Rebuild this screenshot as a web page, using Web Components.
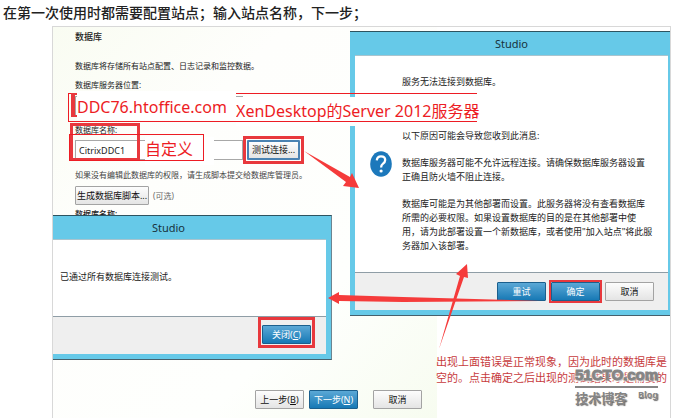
<!DOCTYPE html>
<html lang="zh-CN">
<head>
<meta charset="utf-8">
<title>配置站点</title>
<style>
html,body{margin:0;height:100%;overflow:hidden;background:#fff}
body{font-family:"Noto Sans","Noto Sans CJK SC",sans-serif;color:#222}
</style>
</head>
<body>
<site-article></site-article>
<script>
const define = (name, html) => customElements.define(name, class extends HTMLElement {
  connectedCallback() {
    if (this.shadowRoot) return;
    this.attachShadow({mode: 'open'}).innerHTML = html;
  }
});

define('ui-button', `
<style>
:host{display:block;width:49px;height:19px}
button{display:block;box-sizing:border-box;width:100%;height:100%;padding:0;border:1px solid #a3a3a3;border-radius:1px;
 background:linear-gradient(#fdfdfd,#e4e4e4);color:#111;font:9px/16px "Noto Sans","Noto Sans CJK SC",sans-serif;white-space:nowrap}
:host([kind=primary]) button{background:linear-gradient(#5ba8d6,#1779b5);border-color:#1b5f8d;color:#fff}
:host([kind=focus]) button{border:2px solid #4a82b2;line-height:14px}
</style><button type="button"><slot></slot></button>`);

define('mark-box', `
<style>
:host{display:block;box-sizing:border-box;border:3px solid #e8383d;padding:1px}
:host([thin]){border:1px solid #ed1c24}
</style><slot></slot>`);

define('studio-dialog', `
<style>
:host{display:flex;flex-direction:column;box-sizing:border-box;background:#66c9e8;border-top:1px solid #2d5360;border-bottom:1px solid #46606c}
header{height:23px;padding-right:var(--title-inset,0);text-align:center;font-size:11px;line-height:23px;color:#17323c}
.body{flex:1;background:#fff;border-top:1px solid #a9c4ce;box-sizing:border-box;font-size:9px;line-height:14px;color:#222}
footer{display:flex;align-items:center;justify-content:flex-end;height:37px;background:#efefef;border-top:1px solid #8f9da6}
</style>
<header>Studio</header>
<div class="body"><slot></slot></div>
<footer><slot name="actions"></slot></footer>`);

define('error-dialog', `
<style>
:host{display:block}
studio-dialog{height:285px;padding:0 2px 5px 5px}
.msg{display:grid;grid-template-columns:32px 1fr;padding:19px 14px 0 15px}
p{margin:0 0 13px;grid-column:2}
p.first{margin-bottom:40px}
svg{grid-column:1;width:22px;height:26px;margin-top:-5px}
.actions{display:flex;align-items:center;gap:3px;padding-right:14px}
mark-box{padding:0;border-width:2px}
</style>
<studio-dialog>
<div class="msg">
<p class="first">服务无法连接到数据库。</p>
<p>以下原因可能会导致您收到此消息:</p>
<svg viewBox="0 0 22 26"><ellipse cx="11" cy="13" rx="10.8" ry="12.8" fill="#1c78bb"/><path d="M6.8 9.3Q7.2 5.4 11 5.4Q15.2 5.4 15.2 9Q15.2 11.2 12.8 12.9Q11.1 14.2 11.1 16.4" fill="none" stroke="#fff" stroke-width="2.3"/><circle cx="11.1" cy="20" r="1.6" fill="#fff"/></svg>
<p>数据库服务器可能不允许远程连接。请确保数据库服务器设置<br>正确且防火墙不阻止连接。</p>
<p>数据库可能是为其他部署而设置。此服务器将没有查看数据库<br>所需的必要权限。如果设置数据库的目的是在其他部署中使<br>用，请为此部署设置一个新数据库，或者使用"加入站点"将此服<br>务器加入该部署。</p>
</div>
<div class="actions" slot="actions">
<ui-button kind="primary">重试</ui-button>
<mark-box><ui-button kind="primary">确定</ui-button></mark-box>
<ui-button>取消</ui-button>
</div>
</studio-dialog>`);

define('success-dialog', `
<style>
:host{display:block}
studio-dialog{--title-inset:42px;height:145px;padding:0 5px 5px 0;border-right:1px solid #6b8591}
p{margin:0;padding:30px 7px}
mark-box{align-self:flex-start;margin-right:11px;padding:5px 1px 1px}
</style>
<studio-dialog>
<p>已通过所有数据库连接测试。</p>
<mark-box slot="actions"><ui-button kind="primary">关闭(<u>C</u>)</ui-button></mark-box>
</studio-dialog>`);

define('site-wizard', `
<style>
:host{display:flex;flex-direction:column;box-sizing:border-box;padding:0 0 9px 22px;font-size:8px;
 background:linear-gradient(135deg,#f9fcf2,#fefefc 30%,#fefffd 70%,#f7fcf0)}
h2{margin:0;font-size:9px;line-height:20px;font-weight:500;color:#222}
p{margin:0;line-height:12px}
.intro{padding:13px 0 7px}
label{display:block;line-height:12px}
input{box-sizing:border-box;width:168px;height:20px;border:1px solid #a8a8a8;background:#fff;padding:0 3px;font:9px "Noto Sans",sans-serif;color:#222;display:block}
.server{margin:5px 0 8px;height:20px}
.row{display:flex;align-items:center;height:28px}
mark-box{flex:none}
mark-box ui-button{width:53px;height:20px}
.hint{padding:5px 0 5px;color:#444}
.script{display:flex;align-items:center;gap:4px;color:#666}
.script ui-button{width:74px}
.next{margin-top:3px;font-weight:500}
.nav{display:flex;margin-top:auto;gap:5px;padding-left:180px}
.nav .last{margin-left:10px}
</style>
<h2>数据库</h2>
<p class="intro">数据库将存储所有站点配置、日志记录和监控数据。</p>
<label for="server">数据库服务器位置:</label>
<input id="server" class="server">
<label for="db">数据库名称:</label>
<div class="row"><input id="db" value="CitrixDDC1"><mark-box><ui-button kind="focus">测试连接...</ui-button></mark-box></div>
<p class="hint">如果没有编辑此数据库的权限，请生成脚本提交给数据库管理员。</p>
<div class="script"><ui-button>生成数据库脚本...</ui-button><span>(可选)</span></div>
<p class="next">数据库名称:</p>
<div class="nav"><ui-button>上一步(<u>B</u>)</ui-button><ui-button kind="primary">下一步(<u>N</u>)</ui-button><ui-button class="last">取消</ui-button></div>`);

define('blog-watermark', `
<style>
:host{display:block;color:#858585;font-weight:700;text-shadow:-1px -1px 1px #fff,1px 1px 1px #666}
.top{font:700 15px/22px "Liberation Sans",sans-serif;-webkit-text-stroke:1px #858585;text-shadow:-1px -1px 1px #fff,0 -2px 2px #fff,0 2px 2px #fff,1px 1px 1px #555;border-bottom:2px solid #858585;text-align:center;white-space:nowrap}
.bottom{display:flex;justify-content:space-between;font-size:13px;line-height:20px}
.bottom span:last-child{font-size:9px;line-height:14px}
</style>
<div class="top">51CTO.com</div>
<div class="bottom"><span>技术博客</span><span>Blog</span></div>`);

define('annotated-figure', `
<style>
:host{display:block;position:relative;box-sizing:border-box;border:1px solid #d8d8d8;border-bottom:0;overflow:hidden;background:#fff}
site-wizard{width:384px;height:100%}
.pin{position:absolute}
.error{left:297px;right:0;top:4px}
.success{left:0;top:188px;width:279px}
.red{color:#ed1c24;font-size:16px;white-space:nowrap}
.serverbox{left:15px;top:66px;width:409px;height:29px;border-right:0}
.serverold{left:18px;top:66px;width:6px;height:24px;box-sizing:border-box;border:solid #e8383d;border-width:2px 0 2px 4px}
.xen{left:183px;top:70px;height:29px;line-height:28px;background:#fff}
.ddc{left:24px;top:64px;width:160px;height:29px;line-height:32px}
.ddc{background:linear-gradient(#fff,#fff) 0 0/159px 100% no-repeat}
.named{left:17px;top:96px;width:70px;height:38px}
.custom{left:92px;top:110px;width:69px;height:28px;background:#fff;line-height:24px}
.custombox{left:16px;top:107px;width:135px;height:27px}
.note{left:383px;top:327px;color:#c73b3d;font-size:11px;line-height:16px;white-space:nowrap}
.mark{left:522px;top:337px;width:83px}
svg{left:0;top:0;width:619px;height:392px}
</style>
<site-wizard></site-wizard>
<error-dialog class="pin error"></error-dialog>
<success-dialog class="pin success"></success-dialog>
<div class="pin red xen">XenDesktop的Server 2012服务器</div>
<mark-box thin class="pin serverbox"></mark-box>
<div class="pin serverold"></div>
<div class="pin red ddc">DDC76.htoffice.com</div>
<div class="pin red custom">自定义</div>
<mark-box class="pin named"></mark-box>
<mark-box thin class="pin custombox"></mark-box>
<div class="pin note">出现上面错误是正常现象，因为此时的数据库是<br>空的。点击确定之后出现的测试结果才是需要的</div>
<svg class="pin" viewBox="0 0 619 392" fill="#f53b3b">
<path d="M251 124 L297 150 L299 146 L306 161 L290 159 L293 155Z"/>
<path d="M275 271 L286 265 L286 268 L350 270 L488 274 L350 275 L286 274 L286 277Z"/>
<path d="M386 322 L407 249 L403 247 L414 237 L415 251 L411 250Z"/>
</svg>
<blog-watermark class="pin mark"></blog-watermark>`);

define('site-article', `
<style>
:host{display:flex;flex-direction:column;height:100%}
h1{margin:0;padding:0 3px;font-size:14px;line-height:26px;font-weight:500;color:#222}
annotated-figure{flex:1;margin:0 2px 0 52px}
</style>
<h1>在第一次使用时都需要配置站点；输入站点名称，下一步；</h1>
<annotated-figure></annotated-figure>`);
</script>
</body>
</html>
